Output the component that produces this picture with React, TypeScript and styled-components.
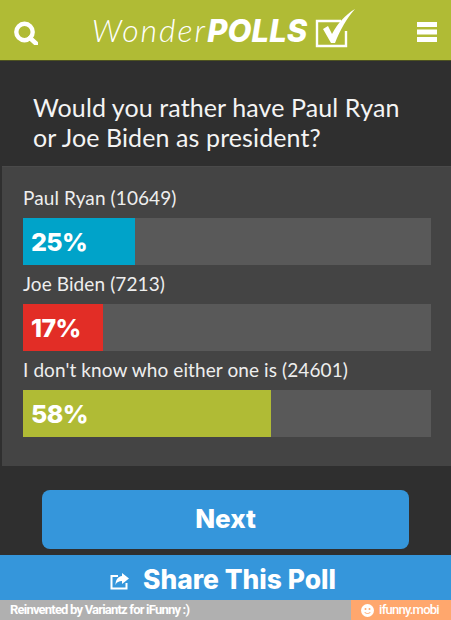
import React from "react";
import styled, { createGlobalStyle } from "styled-components";

const GlobalStyle = createGlobalStyle`
  html, body {
    margin: 0;
    padding: 0;
    background: #2f2f2f;
  }
`;

const Page = styled.div`
  width: 451px;
  height: 620px;
  display: flex;
  flex-direction: column;
  overflow: hidden;
  background: #2f2f2f;
  font-family: Lato, "Open Sans", sans-serif;
  color: #fff;
`;

const Header = styled.header`
  height: 61px;
  flex: none;
  box-sizing: border-box;
  padding: 4px 14px 0 13px;
  display: flex;
  align-items: center;
  justify-content: space-between;
  background: #b0bb35;
  border-bottom: 1px solid #4d5220;
`;

const Logo = styled.div`
  display: flex;
  align-items: center;
  gap: 8px;
  margin: -3px 6px 0 0;
  font-size: 32px;
  line-height: 40px;
  font-style: italic;
  font-weight: 300;
  letter-spacing: 2px;
`;

const LogoBold = styled.span`
  font-family: Inter, Lato, sans-serif;
  font-size: 31px;
  font-weight: 800;
  letter-spacing: 0.1px;
`;

const Question = styled.h1`
  margin: 0;
  height: 105px;
  flex: none;
  box-sizing: border-box;
  padding: 31px 20px 0 33px;
  font-size: 25px;
  line-height: 30px;
  font-weight: 400;
  letter-spacing: 0.1px;
  color: #f4f4f4;
`;

const Results = styled.section`
  height: 300px;
  flex: none;
  box-sizing: border-box;
  margin-left: 2px;
  padding: 16px 20px 0 21px;
  background: #444444;
  border-top: 1px solid #4a4a4a;
`;

const Label = styled.div<{ $first?: boolean }>`
  height: ${(p) => (p.$first ? 35 : 39)}px;
  box-sizing: border-box;
  padding-top: ${(p) => (p.$first ? 0 : 4)}px;
  font-size: 19px;
  line-height: 30px;
  letter-spacing: 0.1px;
  color: #eeeeee;
`;

const Track = styled.div`
  height: 47px;
  background: #595959;
`;

const Fill = styled.div<{ $color: string }>`
  height: 100%;
  box-sizing: border-box;
  padding-left: 8px;
  display: flex;
  align-items: center;
  background: ${(p) => p.$color};
  font-family: Inter, Lato, sans-serif;
  font-size: 25px;
  font-weight: 800;
  letter-spacing: -0.6px;
`;

const Actions = styled.div`
  flex: 1;
  box-sizing: border-box;
  padding: 24px 42px 6px;
`;

const NextButton = styled.button`
  width: 100%;
  height: 59px;
  display: block;
  padding: 0 0 2px;
  border: 0;
  border-radius: 8px;
  background: #3596db;
  color: #fff;
  font-family: Inter, Lato, sans-serif;
  font-size: 26px;
  font-weight: 800;
`;

const ShareBar = styled.div`
  height: 45px;
  flex: none;
  box-sizing: border-box;
  display: flex;
  align-items: center;
  justify-content: center;
  gap: 13px;
  padding: 3px 5px 0 0;
  background: #3596db;
  font-family: Inter, Lato, sans-serif;
  font-size: 26.4px;
  font-weight: 800;
`;

const Credit = styled.footer`
  height: 20px;
  flex: none;
  display: flex;
  background: #b0b0b0;
  font-family: Roboto, sans-serif;
  font-size: 13px;
  line-height: 20px;
  font-weight: 700;
`;

const CreditText = styled.div`
  flex: 1;
  padding-left: 10px;
  letter-spacing: -0.8px;
`;

const Badge = styled.div`
  width: 100px;
  display: flex;
  align-items: center;
  justify-content: center;
  gap: 5px;
  padding-right: 2px;
  box-sizing: border-box;
  background: #ffa76d;
  font-weight: 500;
  letter-spacing: -0.75px;
`;

const ShareGlyph = styled.svg`
  margin-top: 3px;
`;

const CheckGlyph = styled.svg`
  margin-top: -3px;
`;

const SearchIcon = () => (
  <svg width="25" height="25" viewBox="0 0 25 25" fill="none">
    <circle cx="11.5" cy="12" r="8.2" stroke="#fff" strokeWidth="4.4" />
    <path d="M17 18l6 5.5" stroke="#fff" strokeWidth="4.6" strokeLinecap="round" />
  </svg>
);

const MenuIcon = () => (
  <svg width="20" height="20" viewBox="0 0 20 20" fill="#fff">
    <rect y="0" width="20" height="5" />
    <rect y="7.5" width="20" height="5" />
    <rect y="15" width="20" height="5" />
  </svg>
);

const CheckBox = () => (
  <CheckGlyph width="42" height="42" viewBox="0 0 42 42" fill="none">
    <path d="M26 13H2v25h29V23" stroke="#fff" strokeWidth="2.4" />
    <path d="M8 21l5-3 4 8C23 15 30 7 40 1c-8 9-15 21-20 34h-4z" fill="#fff" />
  </CheckGlyph>
);

const ShareIcon = () => (
  <ShareGlyph width="20" height="18" viewBox="0 0 20 18" fill="none">
    <path d="M8 4H1.5v12.5h15V11" stroke="#fff" strokeWidth="2" />
    <path d="M12 1l7 5.5-7 5.5V9C9 9 6.5 10 5.5 13 5.5 8 8 4.500 12 4z" fill="#fff" />
  </ShareGlyph>
);

const SmileIcon = () => (
  <svg width="13" height="13" viewBox="0 0 13 13">
    <circle cx="6.500" cy="6.500" r="6.500" fill="#fff" />
    <circle cx="4.500" cy="5" r="1" fill="#ffa76d" />
    <circle cx="8.500" cy="5" r="1" fill="#ffa76d" />
    <path d="M3.500 8c1.500 2 4.500 2 6 0" stroke="#ffa76d" strokeWidth="1" fill="none" />
  </svg>
);

const answers = [
  { label: "Paul Ryan (10649)", percent: 25, width: 112, color: "#00a3c9" },
  { label: "Joe Biden (7213)", percent: 17, width: 80, color: "#e22d26" },
  { label: "I don't know who either one is (24601)", percent: 58, width: 248, color: "#b0bb35" },
];

const App = () => {
  return (
    <Page>
      <GlobalStyle />
      <Header>
        <SearchIcon />
        <Logo>
          <span>
            Wonder<LogoBold>POLLS</LogoBold>
          </span>
          <CheckBox />
        </Logo>
        <MenuIcon />
      </Header>
      <Question>
        Would you rather have Paul Ryan
        <br />
        or Joe Biden as president?
      </Question>
      <Results>
        {answers.map((answer, index) => (
          <div key={answer.label}>
            <Label $first={index === 0}>{answer.label}</Label>
            <Track>
              <Fill $color={answer.color} style={{ width: answer.width }}>
                {answer.percent}%
              </Fill>
            </Track>
          </div>
        ))}
      </Results>
      <Actions>
        <NextButton>Next</NextButton>
      </Actions>
      <ShareBar>
        <ShareIcon />
        Share This Poll
      </ShareBar>
      <Credit>
        <CreditText>Reinvented by Variantz for iFunny :)</CreditText>
        <Badge>
          <SmileIcon />
          ifunny.mobi
        </Badge>
      </Credit>
    </Page>
  );
};

export default App;
